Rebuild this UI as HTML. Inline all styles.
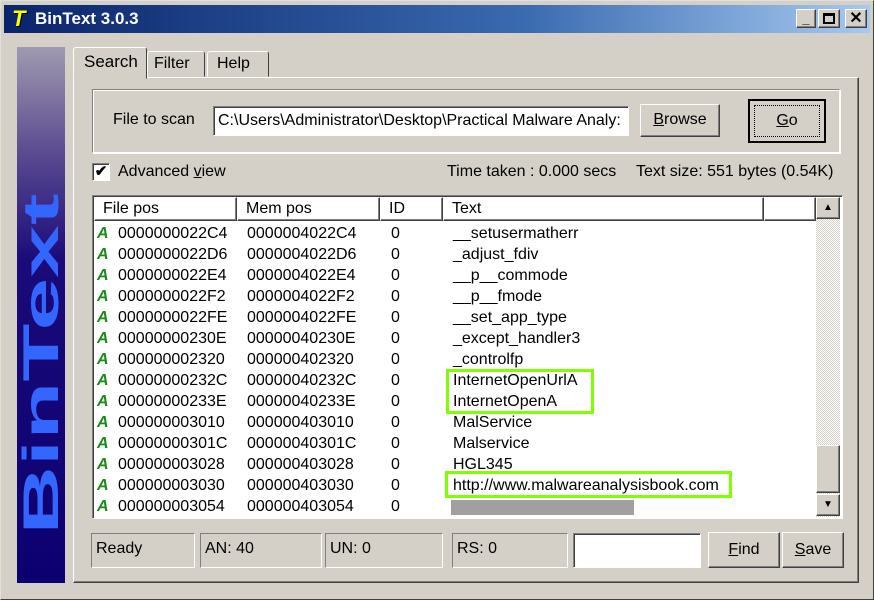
<!DOCTYPE html>
<html style="overflow:hidden;height:600px"><head><meta charset="utf-8"><style>
*{margin:0;padding:0;box-sizing:border-box}
body{width:874px;height:600px;background:#d4d0c8;font-family:"Liberation Sans",sans-serif;font-size:16px;color:#000;position:relative;overflow:hidden}
.a{position:absolute}
.raised{border:1px solid;border-color:#fff #404040 #404040 #fff;box-shadow:inset -1px -1px #808080}
.sunk{border:1px solid;border-color:#808080 #fff #fff #808080;box-shadow:inset 1px 1px #404040}
.st{border:1px solid;border-color:#808080 #fff #fff #808080;padding:6px 0 0 4px}
.row{position:absolute;left:97px;height:21px;line-height:21px;white-space:nowrap}
.row span{position:absolute}
.ic{color:#1a8a1a;font-weight:bold;font-style:italic;left:0}
.hd{position:absolute;top:197px;height:24px;line-height:22px;padding-left:8px}
.btn{text-align:center;line-height:30px}
u{text-decoration:underline}
</style></head><body>
<div class="a" style="left:0;top:0;width:874px;height:600px;border:1px solid;border-color:#e0e0e0 #404040 #404040 #e0e0e0"></div>
<div class="a" style="left:4px;top:5px;width:866px;height:28px;background:linear-gradient(90deg,#0a246a,#3a6ab0 60%,#a6caf0)"></div>
<div class="a" style="left:12px;top:6px;font:italic bold 22px 'Liberation Sans';color:#ff0;text-shadow:1px 1px #000">T</div>
<div class="a" style="left:35px;top:9px;font-weight:bold;font-size:17px;color:#fff">BinText 3.0.3</div>
<div class="a raised" style="left:796px;top:9px;width:20px;height:19px;background:#d4d0c8;font-size:13px;font-weight:bold;text-align:center;line-height:18px">_</div>
<div class="a raised" style="left:818px;top:9px;width:22px;height:19px;background:#d4d0c8"><div class="a" style="left:4px;top:3px;width:12px;height:11px;border:2px solid #000;border-top-width:3px"></div></div>
<div class="a raised" style="left:845px;top:9px;width:22px;height:19px;background:#d4d0c8;font-weight:bold;text-align:center;line-height:17px">✕</div>
<div class="a" style="left:17px;top:47px;width:48px;height:536px;overflow:hidden;background:linear-gradient(180deg,#a09ab0,#5a4a90 20%,#1a0a7a 40%,#0c0070)">
<div class="a" style="left:-166px;top:294px;width:380px;height:46px;text-align:center;transform:rotate(-90deg) scaleX(1.9);font:900 50px 'Liberation Sans',sans-serif;color:#3366ff;white-space:nowrap;line-height:46px">BinText</div>
</div>
<div class="a" style="left:73px;top:77px;width:786px;height:506px;border:1px solid;border-color:#fff #404040 #404040 #fff;box-shadow:inset -1px -1px #808080"></div>
<div class="a" style="left:73px;top:47px;width:74px;height:32px;background:#d4d0c8;border:1px solid;border-color:#fff #404040 transparent #fff;border-radius:3px 3px 0 0;padding:4px 0 0 10px;font-size:17px">Search</div>
<div class="a" style="left:147px;top:51px;width:58px;height:26px;border:1px solid;border-color:#fff #404040 transparent #fff;border-radius:3px 3px 0 0;padding:3px 0 0 6px">Filter</div>
<div class="a" style="left:207px;top:51px;width:62px;height:26px;border:1px solid;border-color:#fff #404040 transparent #fff;border-radius:3px 3px 0 0;padding:3px 0 0 9px">Help</div>
<div class="a" style="left:92px;top:89px;width:748px;height:64px;border:1px solid;border-color:#808080 #fff #fff #808080;box-shadow:1px 1px #fff,inset 1px 1px #fff"></div>
<div class="a" style="left:113px;top:111px">File to scan</div>
<div class="a sunk" style="left:213px;top:106px;width:416px;height:30px;background:#fff;padding:5px 0 0 4px;white-space:nowrap;overflow:hidden">C:\Users\Administrator\Desktop\Practical Malware Analy:</div>
<div class="a raised btn" style="left:640px;top:104px;width:80px;height:33px"><u>B</u>rowse</div>
<div class="a btn" style="left:748px;top:99px;width:78px;height:44px;border:2px solid #000;line-height:40px"><div class="a" style="left:4px;top:4px;right:4px;bottom:4px;border:1px dotted #000"></div><u>G</u>o</div>
<div class="a sunk" style="left:92px;top:163px;width:18px;height:18px;background:#fff;font-size:15px;line-height:16px;text-align:center;font-weight:bold">✔</div>
<div class="a" style="left:118px;top:163px">Advanced <u>v</u>iew</div>
<div class="a" style="left:447px;top:163px">Time taken : 0.000 secs</div>
<div class="a" style="left:636px;top:163px">Text size: 551 bytes (0.54K)</div>
<div class="a sunk" style="left:92px;top:195px;width:751px;height:324px;background:#fff"></div>
<div class="hd raised" style="left:94px;width:143px">File pos</div>
<div class="hd raised" style="left:237px;width:143px">Mem pos</div>
<div class="hd raised" style="left:380px;width:63px">ID</div>
<div class="hd raised" style="left:443px;width:321px">Text</div>
<div class="hd raised" style="left:764px;width:52px"></div>
<div class="a" style="left:816px;top:197px;width:24px;height:320px;background:repeating-conic-gradient(#d4d0c8 0 25%,#fff 0 50%) 0 0/2px 2px"></div>
<div class="a raised" style="left:816px;top:197px;width:24px;height:22px;background:#d4d0c8;font-size:10px;text-align:center;line-height:20px">▲</div>
<div class="a raised" style="left:816px;top:445px;width:24px;height:48px;background:#d4d0c8"></div>
<div class="a raised" style="left:816px;top:494px;width:24px;height:22px;background:#d4d0c8;font-size:10px;text-align:center;line-height:20px">▼</div>
<div class="row" style="top:223px"><span class="ic">A</span><span style="left:21px">0000000022C4</span><span style="left:150px">0000004022C4</span><span style="left:294px">0</span><span style="left:356px">__setusermatherr</span></div>
<div class="row" style="top:244px"><span class="ic">A</span><span style="left:21px">0000000022D6</span><span style="left:150px">0000004022D6</span><span style="left:294px">0</span><span style="left:356px">_adjust_fdiv</span></div>
<div class="row" style="top:265px"><span class="ic">A</span><span style="left:21px">0000000022E4</span><span style="left:150px">0000004022E4</span><span style="left:294px">0</span><span style="left:356px">__p__commode</span></div>
<div class="row" style="top:286px"><span class="ic">A</span><span style="left:21px">0000000022F2</span><span style="left:150px">0000004022F2</span><span style="left:294px">0</span><span style="left:356px">__p__fmode</span></div>
<div class="row" style="top:307px"><span class="ic">A</span><span style="left:21px">0000000022FE</span><span style="left:150px">0000004022FE</span><span style="left:294px">0</span><span style="left:356px">__set_app_type</span></div>
<div class="row" style="top:328px"><span class="ic">A</span><span style="left:21px">00000000230E</span><span style="left:150px">00000040230E</span><span style="left:294px">0</span><span style="left:356px">_except_handler3</span></div>
<div class="row" style="top:349px"><span class="ic">A</span><span style="left:21px">000000002320</span><span style="left:150px">000000402320</span><span style="left:294px">0</span><span style="left:356px">_controlfp</span></div>
<div class="row" style="top:370px"><span class="ic">A</span><span style="left:21px">00000000232C</span><span style="left:150px">00000040232C</span><span style="left:294px">0</span><span style="left:356px">InternetOpenUrlA</span></div>
<div class="row" style="top:391px"><span class="ic">A</span><span style="left:21px">00000000233E</span><span style="left:150px">00000040233E</span><span style="left:294px">0</span><span style="left:356px">InternetOpenA</span></div>
<div class="row" style="top:412px"><span class="ic">A</span><span style="left:21px">000000003010</span><span style="left:150px">000000403010</span><span style="left:294px">0</span><span style="left:356px">MalService</span></div>
<div class="row" style="top:433px"><span class="ic">A</span><span style="left:21px">00000000301C</span><span style="left:150px">00000040301C</span><span style="left:294px">0</span><span style="left:356px">Malservice</span></div>
<div class="row" style="top:454px"><span class="ic">A</span><span style="left:21px">000000003028</span><span style="left:150px">000000403028</span><span style="left:294px">0</span><span style="left:356px">HGL345</span></div>
<div class="row" style="top:475px"><span class="ic">A</span><span style="left:21px">000000003030</span><span style="left:150px">000000403030</span><span style="left:294px">0</span><span style="left:356px">http://www.malwareanalysisbook.com</span></div>
<div class="row" style="top:496px"><span class="ic">A</span><span style="left:21px">000000003054</span><span style="left:150px">000000403054</span><span style="left:294px">0</span></div>
<div class="a" style="left:451px;top:500px;width:183px;height:15px;background:#a0a0a0"></div>
<div class="a" style="left:446px;top:369px;width:148px;height:45px;border:3px solid #7fff00"></div>
<div class="a" style="left:445px;top:471px;width:287px;height:27px;border:3px solid #7fff00"></div>
<div class="a st" style="left:91px;top:533px;width:104px;height:35px">Ready</div>
<div class="a st" style="left:200px;top:533px;width:122px;height:35px">AN: 40</div>
<div class="a st" style="left:325px;top:533px;width:118px;height:35px">UN: 0</div>
<div class="a st" style="left:452px;top:533px;width:116px;height:35px">RS: 0</div>
<div class="a sunk" style="left:573px;top:533px;width:128px;height:35px;background:#fff"></div>
<div class="a raised btn" style="left:708px;top:532px;width:72px;height:36px;line-height:34px"><u>F</u>ind</div>
<div class="a raised btn" style="left:782px;top:532px;width:62px;height:36px;line-height:34px"><u>S</u>ave</div>
</body></html>
